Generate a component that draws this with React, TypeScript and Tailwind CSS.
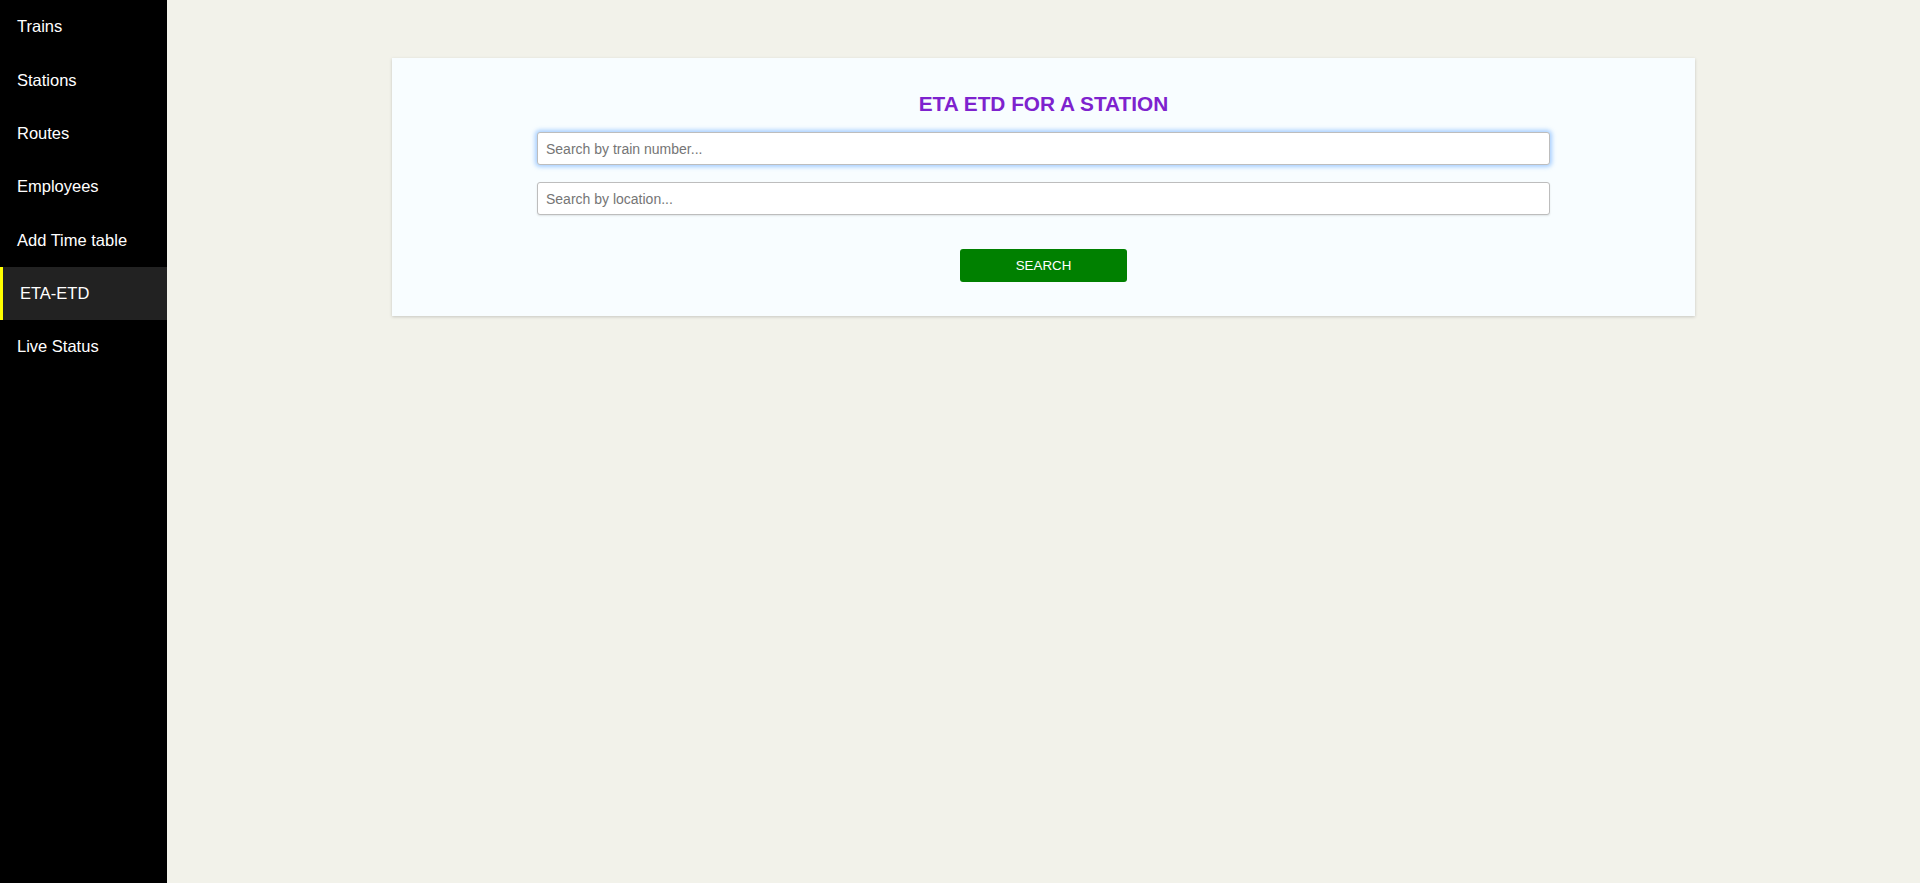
import React, { useState } from 'react';

const navItems = ['Trains', 'Stations', 'Routes', 'Employees', 'Add Time table', 'ETA-ETD', 'Live Status'];

export default function App() {
  const [active] = useState('ETA-ETD');
  const [trainNo, setTrainNo] = useState('');
  const [location, setLocation] = useState('');

  return (
    <div className="flex min-h-[883px] w-full bg-[#f2f2ea] font-['Liberation_Sans',Arial,sans-serif]">
      <aside className="w-[167px] shrink-0 bg-black">
        {navItems.map((item) => (
          <div
            key={item}
            className={
              item === active
                ? 'flex h-[53.33px] items-center border-l-[3px] border-[#ffff00] bg-[#222222] pl-[17px] text-[16.5px] text-white'
                : 'flex h-[53.33px] items-center pl-[17px] text-[16.5px] text-white'
            }
          >
            {item}
          </div>
        ))}
      </aside>

      <main className="flex-1 pt-[58px]">
        <div className="mx-auto flex h-[258px] w-[1303px] flex-col items-center bg-[#f8fdff] shadow-[0_1px_3px_rgba(0,0,0,0.18)]">
          <h2 className="pt-[34px] text-[20.8px] leading-[23px] font-bold text-[#7e22ce]">
            ETA ETD FOR A STATION
          </h2>
          <input
            type="text"
            autoFocus
            value={trainNo}
            onChange={(e) => setTrainNo(e.target.value)}
            placeholder="Search by train number..."
            className="mt-[17px] h-[33px] w-[1013px] rounded-[3px] border border-[#bdbdbd] bg-white px-[8px] text-[14px] text-[#333] shadow-[0_1px_2px_rgba(0,0,0,0.1)] outline-none placeholder:text-[#757575] focus:shadow-[0_0_4px_2px_rgba(100,170,255,0.55)]"
          />
          <input
            type="text"
            value={location}
            onChange={(e) => setLocation(e.target.value)}
            placeholder="Search by location..."
            className="mt-[17px] h-[33px] w-[1013px] rounded-[3px] border border-[#bdbdbd] bg-white px-[8px] text-[14px] text-[#333] shadow-[0_1px_2px_rgba(0,0,0,0.1)] outline-none placeholder:text-[#757575] focus:shadow-[0_0_4px_2px_rgba(100,170,255,0.55)]"
          />
          <button className="mt-[34px] h-[33px] w-[167px] rounded-[3px] bg-[#008000] text-[13.33px] text-white">
            SEARCH
          </button>
        </div>
      </main>
    </div>
  );
}
